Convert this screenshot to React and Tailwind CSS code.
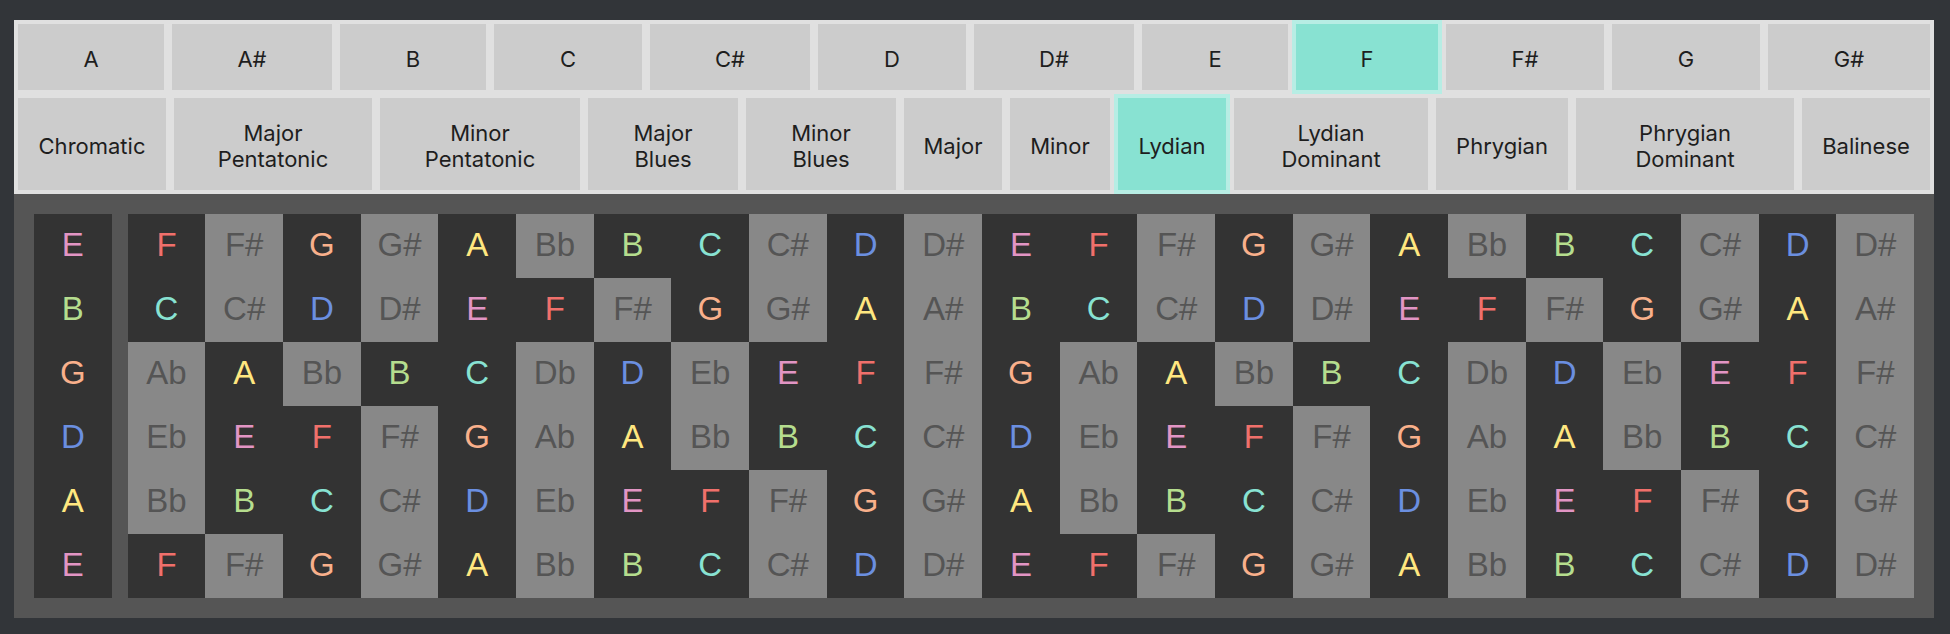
import { useState } from "react";

const ROOTS = ["A", "A#", "B", "C", "C#", "D", "D#", "E", "F", "F#", "G", "G#"];

const SCALES = [
  "Chromatic",
  "Major Pentatonic",
  "Minor Pentatonic",
  "Major Blues",
  "Minor Blues",
  "Major",
  "Minor",
  "Lydian",
  "Lydian Dominant",
  "Phrygian",
  "Phrygian Dominant",
  "Balinese",
];

const STRINGS = [
  "E F F# G G# A Bb B C C# D D#",
  "B C C# D D# E F F# G G# A A#",
  "G Ab A Bb B C Db D Eb E F F#",
  "D Eb E F F# G Ab A Bb B C C#",
  "A Bb B C C# D Eb E F F# G G#",
  "E F F# G G# A Bb B C C# D D#",
].map((line) => {
  const octave = line.split(" ");
  return [...octave, ...octave];
});

const NOTE_COLORS = {
  A: "bg-[#333333] text-[#ffe780]",
  B: "bg-[#333333] text-[#b5dd8e]",
  C: "bg-[#333333] text-[#88e2d2]",
  D: "bg-[#333333] text-[#6b8fe0]",
  E: "bg-[#333333] text-[#e295c4]",
  F: "bg-[#333333] text-[#f0706b]",
  G: "bg-[#333333] text-[#f9b08b]",
};

function Choice({ label, selected, onSelect }) {
  return (
    <button
      type="button"
      aria-pressed={selected}
      onClick={onSelect}
      className={`flex items-center justify-center border-4 border-white/40 pt-5 pb-4 text-center text-[22px] leading-[26px] text-[#1e1e1e] ${
        selected ? "bg-[#88e2d2]" : "bg-[#cccccc]"
      }`}
    >
      <span className="w-min">{label}</span>
    </button>
  );
}

function StringRow({ notes }) {
  const [open, ...frets] = notes;
  return (
    <div className="flex h-16">
      <Note name={open} open />
      {frets.map((name, i) => (
        <Note key={i} name={name} />
      ))}
    </div>
  );
}

function Note({ name, open = false }) {
  return (
    <div
      className={`flex min-w-0 flex-1 items-center justify-center pb-1 ${open ? "mr-4" : ""} ${
        NOTE_COLORS[name] ?? "bg-[#888888] text-[#555555]"
      }`}
    >
      {name}
    </div>
  );
}

export default function App() {
  const [root, setRoot] = useState("F");
  const [scale, setScale] = useState("Lydian");

  return (
    <main className="min-h-screen bg-[#323539] pt-5 pr-4 pb-4 pl-3.5">
      <div
        role="group"
        aria-label="Root note"
        className="grid h-[74px] grid-cols-[154fr_168fr_154fr_156fr_168fr_156fr_168fr_154fr_150fr_166fr_156fr_170fr] bg-[#cccccc] font-[Inter,sans-serif]"
      >
        {ROOTS.map((name) => (
          <Choice key={name} label={name} selected={name === root} onSelect={() => setRoot(name)} />
        ))}
      </div>
      <div
        role="group"
        aria-label="Scale"
        className="grid min-h-[100px] grid-cols-[156fr_206fr_208fr_158fr_158fr_106fr_108fr_116fr_202fr_140fr_226fr_136fr] bg-[#cccccc] font-[Inter,sans-serif]"
      >
        {SCALES.map((name) => (
          <Choice key={name} label={name} selected={name === scale} onSelect={() => setScale(name)} />
        ))}
      </div>
      <section
        aria-label="Fretboard"
        className="bg-[#555555] p-5 font-['Liberation_Sans',sans-serif] text-[33px] leading-none"
      >
        {STRINGS.map((notes, i) => (
          <StringRow key={i} notes={notes} />
        ))}
      </section>
    </main>
  );
}
